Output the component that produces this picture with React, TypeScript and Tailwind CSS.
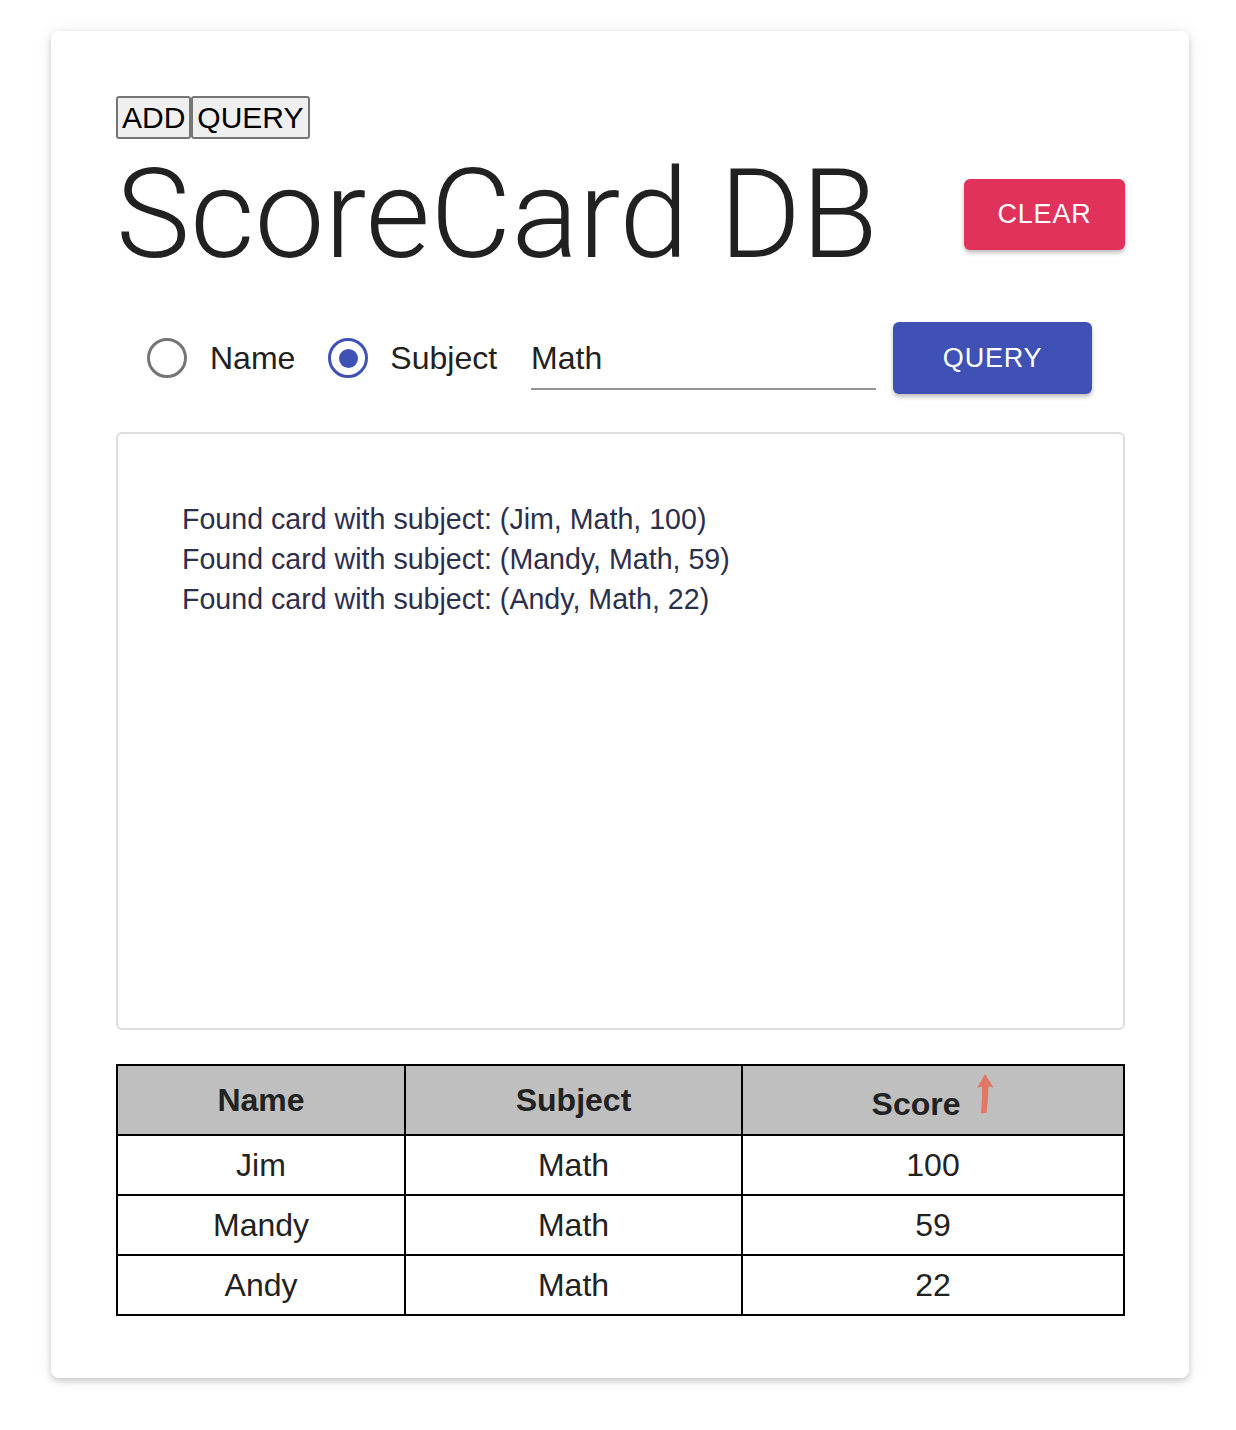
const rows = [
  { name: 'Jim', subject: 'Math', score: 100 },
  { name: 'Mandy', subject: 'Math', score: 59 },
  { name: 'Andy', subject: 'Math', score: 22 },
];

function Radio({ checked }: { checked?: boolean }) {
  return (
    <span
      className={`flex h-[40px] w-[40px] shrink-0 items-center justify-center rounded-full border-[3px] ${
        checked ? 'border-[#3f51b5]' : 'border-[#757575]'
      }`}
    >
      {checked && <span className="h-[19px] w-[19px] rounded-full bg-[#3f51b5]" />}
    </span>
  );
}

function SortArrow() {
  return (
    <svg width="17" height="40" viewBox="0 0 17 40" className="ml-[17px] -translate-y-[14px]">
      <polygon points="8,0 16.5,13.5 11.5,12.5 11,25 9.5,39 4,39.5 5,25 5,12.5 0,14" fill="#e37766" />
    </svg>
  );
}

export default function App() {
  return (
    <div className="min-h-[1430px] bg-white pl-[51px] pt-[31px] font-['Liberation_Sans',Arial,sans-serif]">
      {/* Card */}
      <div className="flex h-[1347px] w-[1138px] flex-col rounded-[8px] bg-white pl-[65px] pr-[64px] pt-[65px] shadow-[0_3px_6px_rgba(0,0,0,0.18),0_1px_18px_rgba(0,0,0,0.08)]">
        {/* native buttons */}
        <div className="flex h-[43px]">
          <button className="h-[43px] rounded-[3px] border-2 border-[#767676] bg-[#efefef] px-[4px] text-[30px] leading-none text-black">
            ADD
          </button>
          <button className="h-[43px] rounded-[3px] border-2 border-[#767676] bg-[#efefef] px-[4px] text-[30px] leading-none text-black">
            QUERY
          </button>
        </div>

        {/* Title row */}
        <div className="flex h-[150px] items-center justify-between">
          <h1 className="font-['Roboto',sans-serif] text-[125px] font-light leading-none text-[#212121]">
            ScoreCard DB
          </h1>
          <button className="h-[71px] w-[161px] rounded-[6px] bg-[#e1325c] text-[27px] tracking-[0.8px] text-white shadow-[0_3px_4px_rgba(0,0,0,0.25)]">
            CLEAR
          </button>
        </div>

        {/* Query row */}
        <div className="mt-[33px] flex h-[72px] items-center pl-[31px]">
          <Radio />
          <span className="ml-[23px] text-[32px] text-[#212121]">Name</span>
          <span className="ml-[33px]">
            <Radio checked />
          </span>
          <span className="ml-[22px] text-[32px] text-[#212121]">Subject</span>
          <div className="ml-[34px] flex h-[72px] w-[345px] flex-col justify-end">
            <div className="pb-[14px] text-[32px] leading-none text-[#212121]">Math</div>
            <div className="mb-[4px] h-[2px] bg-[#949494]" />
          </div>
          <button className="ml-[17px] h-[72px] w-[199px] rounded-[6px] bg-[#3f51b5] text-[27px] tracking-[0.8px] text-white shadow-[0_3px_4px_rgba(0,0,0,0.25)]">
            QUERY
          </button>
        </div>

        {/* Result box */}
        <div className="mt-[38px] h-[598px] rounded-[6px] border-2 border-[#dedede] pl-[64px] pt-[65px] text-[28.6px] leading-[40px] text-[#2c2f4c]">
          {rows.map((r) => (
            <div key={r.name}>
              Found card with subject: ({r.name}, {r.subject}, {r.score})
            </div>
          ))}
        </div>

        {/* Table */}
        <table className="mt-[34px] w-full border-collapse text-[32px] text-[#222]">
          <thead>
            <tr className="h-[70px] bg-[#bfbfbf]">
              <th className="w-[288px] border-2 border-black font-bold">Name</th>
              <th className="w-[337px] border-2 border-black font-bold">Subject</th>
              <th className="border-2 border-black font-bold">
                <span className="inline-flex items-end pt-[8px]">
                  Score
                  <SortArrow />
                </span>
              </th>
            </tr>
          </thead>
          <tbody>
            {rows.map((r) => (
              <tr key={r.name} className="h-[60px]">
                <td className="border-2 border-black text-center">{r.name}</td>
                <td className="border-2 border-black text-center">{r.subject}</td>
                <td className="border-2 border-black text-center">{r.score}</td>
              </tr>
            ))}
          </tbody>
        </table>
      </div>
    </div>
  );
}
